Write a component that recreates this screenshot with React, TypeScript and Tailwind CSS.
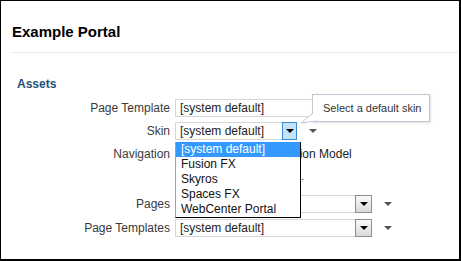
import React from "react";

const font = { fontFamily: '"Liberation Sans", Arial, sans-serif' };

function Arrow({ color = "border-t-black" }: { color?: string }) {
  return <div className={`w-0 h-0 border-x-[4px] border-x-transparent border-t-[4px] ${color}`} />;
}

function Select({ width, active = false }: { width: string; active?: boolean }) {
  return (
    <div className="flex items-center gap-[12px]">
      <div className={`flex h-[18px] ${width} border border-[#d6d6d6] bg-white`}>
        <span className="flex-1 pl-[4px] text-[12px] leading-[16px] text-[#222] whitespace-nowrap overflow-hidden">
          [system default]
        </span>
        {active ? (
          <div className="w-[15px] h-[18px] -mt-px -mr-px border border-[#3a8ad0] bg-[#c4e3f8] flex items-center justify-center">
            <Arrow />
          </div>
        ) : (
          <div className="w-[17px] h-[18px] -mt-px -mr-px border border-[#8c8c8c] bg-gradient-to-b from-[#fbfbfb] to-[#d9d9d9] flex items-center justify-center">
            <Arrow />
          </div>
        )}
      </div>
      <Arrow color="border-t-[#555]" />
    </div>
  );
}

function Label({ children }: { children: React.ReactNode }) {
  return <div className="w-[169px] text-right text-[12px] text-[#3a3a3a] whitespace-nowrap">{children}</div>;
}

export default function App() {
  const skins = ["[system default]", "Fusion FX", "Skyros", "Spaces FX", "WebCenter Portal"];
  return (
    <div style={font} className="relative w-[461px] h-[261px] bg-white border-t border-l border-r-2 border-b-2 border-black overflow-hidden">
      <h1 className="pl-[11px] pt-[22px] text-[15px] leading-[17px] font-bold text-black">Example Portal</h1>
      <div className="ml-[10px] mt-[12px] h-px bg-[#e1e9f2]" />
      <h2 className="pl-[16px] mt-[24px] text-[12px] leading-[14px] font-bold text-[#1d527f]">Assets</h2>

      <div className="mt-[8px] flex flex-col">
        <div className="flex items-center gap-[5px] h-[18px]">
          <Label>Page Template</Label>
          <div className="h-[18px] w-[197px] border border-[#d6d6d6] pl-[4px] text-[12px] leading-[16px] text-[#222]">
            [system default]
          </div>
        </div>
        <div className="flex items-center gap-[5px] h-[18px] mt-[5px]">
          <Label>Skin</Label>
          <Select width="w-[122px]" active />
        </div>
        <div className="flex items-start gap-[5px] h-[45px] mt-[5px]">
          <div className="h-[18px] flex items-center">
            <Label>Navigation</Label>
          </div>
          <div className="flex flex-col text-[12px] text-[#222]">
            <div className="h-[18px] leading-[18px] pl-[84px] whitespace-nowrap">Navigation Model</div>
            <div className="h-[18px] leading-[18px] pl-[126px] mt-[4px] text-[11px]">.</div>
          </div>
        </div>
        <div className="flex items-center gap-[5px] h-[18px] mt-[5px]">
          <Label>Pages</Label>
          <Select width="w-[197px]" />
        </div>
        <div className="flex items-center gap-[5px] h-[18px] mt-[6px]">
          <Label>Page Templates</Label>
          <Select width="w-[197px]" />
        </div>
      </div>

      {/* open skin list */}
      <div className="absolute left-[174px] top-[141px] w-[126px] border-l border-l-[#a0a0a0] border-r border-b border-r-black border-b-black bg-white">
        {skins.map((s, i) => (
          <div
            key={s}
            className={`h-[15px] pl-[5px] text-[12px] leading-[15px] whitespace-nowrap ${i === 0 ? "bg-[#3399ff] text-white" : "text-[#111]"}`}
          >
            {s}
          </div>
        ))}
      </div>

      {/* tooltip */}
      <div className="absolute left-[311px] top-[93px] w-[118px] h-[28px] border border-[#bcc8d4] bg-white shadow-[1px_1px_2px_rgba(0,0,0,0.12)] flex items-center pl-[10px] text-[11px] text-[#333] whitespace-nowrap">
        Select a default skin
      </div>
      <svg className="absolute left-[297px] top-[110px]" width="22" height="14" viewBox="0 0 22 14">
        <path d="M15 2 L3 12 L19 10" fill="white" stroke="#bcc8d4" strokeWidth="1" />
      </svg>
    </div>
  );
}
